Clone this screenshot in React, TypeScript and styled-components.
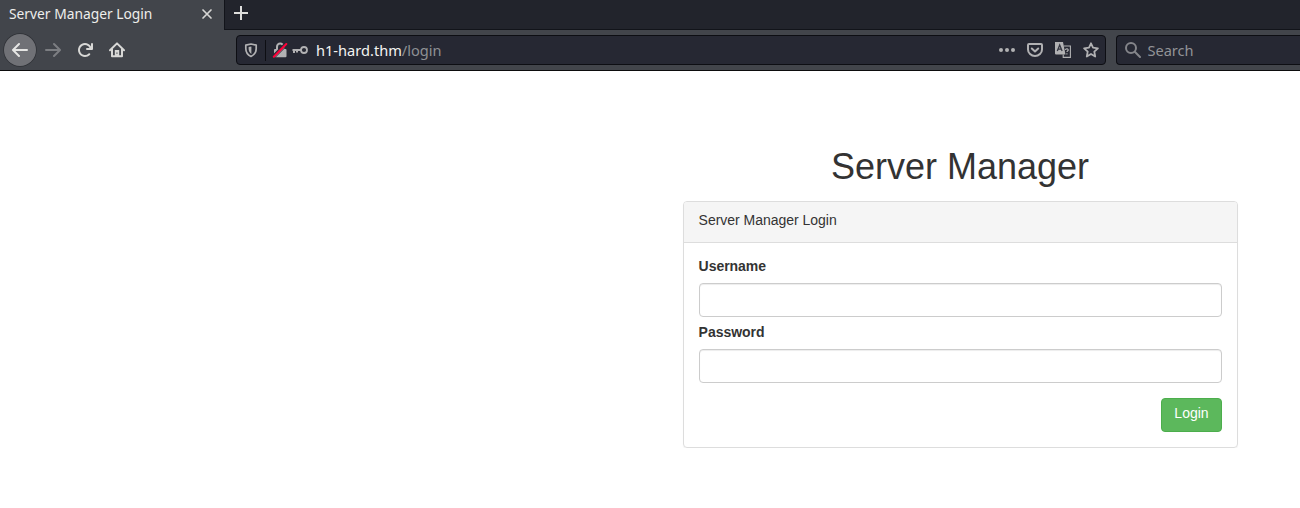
import React from "react";
import styled, { createGlobalStyle } from "styled-components";

const GlobalStyle = createGlobalStyle`
  *, *::before, *::after { box-sizing: border-box; }
  body {
    margin: 0;
    background: #fff;
    color: #333;
    font-family: "Liberation Sans", Arial, sans-serif;
    font-size: 14px;
    line-height: 20px;
    overflow: hidden;
  }
`;

const Chrome = styled.header`
  height: 71px;
  background: #42454b;
  border-bottom: 1px solid #0c0c0d;
  font-family: "Noto Sans", sans-serif;
  font-size: 14.6px;
  color: #eeeeec;
`;

const TabStrip = styled.div`
  display: flex;
  height: 30px;
`;

const Tab = styled.div`
  display: flex;
  align-items: center;
  justify-content: space-between;
  width: 224px;
  height: 30px;
  padding: 0 9px 2px 9px;
  font-size: 13.8px;
  color: #eeeeec;
`;

const StripRest = styled.div`
  flex: 1;
  height: 30px;
  padding: 5px 0 0 9px;
  background: #22242c;
  border-left: 1px solid #12141a;
  border-bottom: 1px solid #12141a;
`;

const Icon = styled.svg<{ $color?: string }>`
  display: block;
  flex: none;
  width: 16px;
  height: 16px;
  color: ${(p) => p.$color ?? "#b1b1b3"};
`;

const Toolbar = styled.div`
  display: flex;
  align-items: center;
  height: 40px;
  padding-left: 4px;
`;

const BackButton = styled.button`
  display: grid;
  flex: none;
  place-items: center;
  width: 32px;
  height: 32px;
  margin-right: 9px;
  padding: 0;
  border: 0;
  border-radius: 50%;
  background: #707176;
  box-shadow: 0 0 0 0.7px #2e3035;
`;

const NavIcons = styled.div`
  display: flex;
  flex: none;
  gap: 16px;
  width: 191px;
`;

const Field = styled.div<{ $width: number; $open?: boolean }>`
  display: flex;
  align-items: center;
  flex: none;
  width: ${(p) => p.$width}px;
  height: 30px;
  padding: 0 6px 0 ${(p) => (p.$open ? 8 : 6)}px;
  border: 1px solid #0d0e13;
  border-radius: ${(p) => (p.$open ? "4px 0 0 4px" : "4px")};
  border-right-width: ${(p) => (p.$open ? 0 : 1)}px;
  background: #262833;
`;

const SearchField = styled(Field)`
  margin-left: 10px;
`;

const Divider = styled.span`
  width: 1px;
  height: 21px;
  margin: 0 6px 0 6px;
  background: #0d0e13;
`;

const Identity = styled.span`
  display: flex;
  gap: 4px;
  margin-right: 8px;
`;

const Address = styled.span`
  flex: 1;
  color: #f3f3f1;
`;

const Path = styled.span`
  color: #8e9094;
`;

const Actions = styled.span`
  display: flex;
  gap: 12px;
`;

const SearchLabel = styled.span`
  margin-left: 6.4px;
  color: #929397;
`;

const Main = styled.main`
  width: 555px;
  margin: 76px 0 0 683px;
`;

const Title = styled.h1`
  margin: 0 0 14px;
  padding-right: 1px;
  font-size: 36px;
  font-weight: 400;
  line-height: 40px;
  text-align: center;
`;

const Panel = styled.section`
  border: 1px solid #ddd;
  border-radius: 4px;
  box-shadow: 0 1px 1px rgba(0, 0, 0, 0.05);
`;

const PanelHeading = styled.div`
  height: 41px;
  padding: 8px 14.6px;
  border-bottom: 1px solid #ddd;
  border-radius: 3px 3px 0 0;
  background: #f5f5f5;
  letter-spacing: -0.02px;
`;

const Form = styled.form`
  display: flex;
  flex-direction: column;
  height: 204px;
  padding: 13px 15px 15px;
`;

const Label = styled.label`
  height: 20px;
  margin: 0 0 7px -0.4px;
  font-weight: 700;
  letter-spacing: -0.04px;
`;

const Input = styled.input`
  width: 100%;
  height: 34px;
  margin: 0 0 5px;
  padding: 6px 12px;
  border: 1px solid #ccc;
  border-radius: 4px;
  background: #fff;
  font: inherit;
  box-shadow: inset 0 1px 1px rgba(0, 0, 0, 0.075);
`;

const LoginButton = styled.button`
  align-self: flex-end;
  width: 61px;
  height: 34px;
  margin-top: 10px;
  padding: 0 0 4px;
  border: 1px solid #4cae4c;
  border-radius: 4px;
  background: #5cb85c;
  color: #fff;
  font: inherit;
`;

const line = {
  fill: "none",
  stroke: "currentColor",
  strokeWidth: 2,
  strokeLinecap: "round",
  strokeLinejoin: "round",
} as const;

const ARROW =
  "M15 7H3.414l4.293-4.293a1 1 0 0 0-1.414-1.414l-6 6a1 1 0 0 0 0 1.414l6 6a1 1 0 0 0 1.414-1.414L3.414 9H15a1 1 0 0 0 0-2z";

export default function App() {
  return (
    <>
      <GlobalStyle />
      <Chrome>
        <TabStrip>
          <Tab>
            Server Manager Login
            <Icon viewBox="0 0 16 16" $color="#d6d6d4">
              <path d="M4 4L12 12M12 4L4 12" {...line} strokeWidth={1.7} />
            </Icon>
          </Tab>
          <StripRest>
            <Icon viewBox="0 0 16 16" $color="#dededc">
              <path d="M7 1v14M0 8h14" {...line} strokeLinecap="butt" />
            </Icon>
          </StripRest>
        </TabStrip>
        <Toolbar>
          <BackButton aria-label="Back">
            <Icon viewBox="0 0 16 16" $color="#e6e6e4">
              <path fill="currentColor" d={ARROW} />
            </Icon>
          </BackButton>
          <NavIcons>
            <Icon viewBox="0 0 16 16" $color="#7c7e82">
              <path fill="currentColor" transform="matrix(-1 0 0 1 16 0)" d={ARROW} />
            </Icon>
            <Icon viewBox="0 0 16 16" $color="#d8d8d6">
              <path
                fill="currentColor"
                d="M15 1a1 1 0 0 0-1 1v2.418A6.995 6.995 0 1 0 8 15a6.954 6.954 0 0 0 4.95-2.05 1 1 0 0 0-1.414-1.414A5.019 5.019 0 1 1 12.549 6H10a1 1 0 0 0 0 2h5a1 1 0 0 0 1-1V2a1 1 0 0 0-1-1z"
              />
            </Icon>
            <Icon viewBox="0 0 16 16" $color="#d8d8d6">
              <path d="M1 8.2L8 1.4L15 8.2M3 7v7.2h10V7" {...line} />
              <path fill="currentColor" fillRule="evenodd" d="M5.8 14V8h4.4v6zM7.4 10.5v1.2h1.1v-1.2z" />
            </Icon>
          </NavIcons>
          <Field $width={870}>
            <Icon viewBox="0 0 16 16">
              <path
                d="M8 2L13.2 3.1V6.500c0 3.700-1.700 6.300-5.200 8C4.500 12.800 2.800 10.200 2.800 6.500V3.100z"
                {...line}
                strokeWidth={1.700}
              />
              <path d="M8.400 4.600V12C6.300 10.500 5.600 8.800 5.600 6.500V5.100z" fill="currentColor" />
            </Icon>
            <Divider />
            <Identity>
              <Icon viewBox="0 0 16 16">
                <path d="M5 8V4.800a3.200 3.200 0 0 1 6.400 0V8" {...line} />
                <rect x="2" y="7" width="12.500" height="8.200" rx="1" fill="currentColor" />
                <path d="M0.500 14.300L14 0.800" stroke="#262833" strokeWidth="2" />
                <path d="M2.500 16L15.500 3" stroke="#262833" strokeWidth="1" />
                <path d="M1.800 14.800L14.300 2" stroke="#ff0039" strokeWidth="2" strokeLinecap="round" />
              </Icon>
              <Icon viewBox="0 0 16 16">
                <circle cx="12" cy="8" r="3" {...line} strokeWidth={1.8} />
                <path d="M9 8H.5M2 8v3M5 8v2.5" {...line} strokeLinecap="butt" />
              </Icon>
            </Identity>
            <Address>
              h1-hard.thm<Path>/login</Path>
            </Address>
            <Actions>
              <Icon viewBox="0 0 16 16">
                <g fill="currentColor">
                  <circle cx="2" cy="8" r="2" />
                  <circle cx="8" cy="8" r="2" />
                  <circle cx="14" cy="8" r="2" />
                </g>
              </Icon>
              <Icon viewBox="0 0 16 16">
                <path d="M2 2h12a1 1 0 0 1 1 1v4.5a7 6.5 0 0 1-14 0V3a1 1 0 0 1 1-1z" {...line} />
                <path d="M4.8 6.5L8 9.5L11.2 6.5" {...line} />
              </Icon>
              <Icon viewBox="0 0 16 16">
                <path fill="currentColor" d="M0 0h8l2.5 12.5H1a1 1 0 0 1-1-1z" />
                <path d="M2.3 9L4.7 3L7.1 9M3 7.2h3.4" fill="none" stroke="#343641" strokeWidth="1.3" />
                <path d="M9 4h6.4v11.4H8.2V12.5" fill="none" stroke="currentColor" strokeWidth="1.1" />
                <path d="M10.5 8c.2-1.8 3.2-1.3 2.7.3-.3.8-1.3.8-1.3 1.8M11.9 11.3v1.2" fill="none" stroke="currentColor" strokeWidth="1.1" />
              </Icon>
              <Icon viewBox="0 0 16 16">
                <path d="M8 1.3L10 5.7L14.9 6.3L11.3 9.6L12.2 14.5L8 12L3.8 14.5L4.7 9.6L1.1 6.3L6 5.7z" {...line} strokeWidth={1.8} />
              </Icon>
            </Actions>
          </Field>
          <SearchField $width={184} $open>
            <Icon viewBox="0 0 16 16" $color="#84858a">
              <circle cx="6" cy="6" r="5" {...line} />
              <path d="M9.8 9.8L15 15" {...line} />
            </Icon>
            <SearchLabel>Search</SearchLabel>
          </SearchField>
        </Toolbar>
      </Chrome>
      <Main>
        <Title>Server Manager</Title>
        <Panel>
          <PanelHeading>Server Manager Login</PanelHeading>
          <Form>
            <Label htmlFor="username">Username</Label>
            <Input id="username" type="text" />
            <Label htmlFor="password">Password</Label>
            <Input id="password" type="password" />
            <LoginButton type="button">Login</LoginButton>
          </Form>
        </Panel>
      </Main>
    </>
  );
}
